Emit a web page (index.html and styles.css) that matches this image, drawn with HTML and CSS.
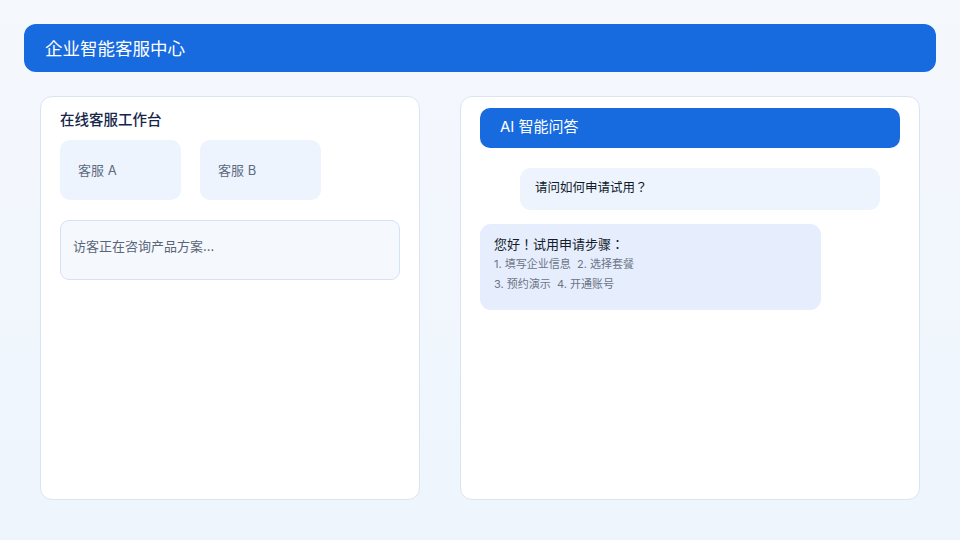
FILE: index.html
```html
<!DOCTYPE html>
<html>
<head>
<meta charset="utf-8">
<title>企业智能客服中心</title>
<link rel="stylesheet" href="styles.css">
</head>
<body>
<div class="page">
  <header class="topbar">企业智能客服中心</header>
  <main class="panels">
    <section class="panel panel-left">
      <h2 class="panel-title">在线客服工作台</h2>
      <div class="agents">
        <div class="agent">客服 A</div>
        <div class="agent">客服 B</div>
      </div>
      <div class="visitor">访客正在咨询产品方案...</div>
    </section>
    <section class="panel panel-right">
      <div class="ai-head">AI 智能问答</div>
      <div class="msg msg-user">请问如何申请试用？</div>
      <div class="msg msg-ai">
        <div class="ai-title">您好！试用申请步骤：</div>
        <div class="ai-line">1. 填写企业信息&nbsp; 2. 选择套餐</div>
        <div class="ai-line">3. 预约演示&nbsp; 4. 开通账号</div>
      </div>
    </section>
  </main>
</div>
</body>
</html>
```
FILE: styles.css
```css
* { box-sizing: border-box; }
html, body {
  margin: 0;
  padding: 0;
  width: 960px;
  height: 540px;
  overflow: hidden;
}
body {
  font-family: Inter, "Noto Sans CJK JP", sans-serif;
  background: linear-gradient(180deg, #f5f8fd 0%, #eef5fd 100%);
}
.page {
  padding: 24px 24px 0 24px;
}
.topbar {
  height: 48px;
  background: #186bdf;
  border-radius: 12px;
  color: #ffffff;
  font-size: 17.5px;
  line-height: 50px;
  padding-left: 21px;
}
.panels {
  display: flex;
  gap: 40px;
  margin: 24px 16px 0 16px;
}
.panel {
  height: 404px;
  background: #ffffff;
  border: 1px solid #d9e5f4;
  border-radius: 12px;
  padding: 11px 19px 0 19px;
}
.panel-left { width: 380px; }
.panel-right { width: 460px; }
.panel-title {
  margin: 0 0 8px 0;
  font-size: 14.5px;
  font-weight: 500;
  line-height: 24px;
  color: #16264a;
}
.agents {
  display: flex;
  gap: 19px;
}
.agent {
  width: 121px;
  height: 60px;
  background: #edf4fe;
  border-radius: 10px;
  display: flex;
  align-items: center;
  padding-left: 18px;
  padding-bottom: 2px;
  font-size: 13px;
  color: #5d6b80;
}
.visitor {
  margin-top: 20px;
  height: 60px;
  background: #f5f9fe;
  border: 1px solid #d4e2f3;
  border-radius: 9px;
  padding: 15px 12px;
  font-size: 13px;
  line-height: 20px;
  color: #5b6577;
}
.ai-head {
  height: 40px;
  background: #186bdf;
  border-radius: 10px;
  color: #ffffff;
  font-size: 15px;
  line-height: 38px;
  padding-left: 20px;
}
.msg {
  border-radius: 11px;
}
.msg-user {
  margin: 20px 20px 0 40px;
  height: 42px;
  background: #edf4fe;
  padding-left: 15px;
  font-size: 12.5px;
  line-height: 40px;
  color: #111a2a;
}
.msg-ai {
  margin-top: 14px;
  width: 341px;
  height: 86px;
  background: #e6eefd;
  padding: 10px 14px 0 14px;
}
.ai-title {
  font-size: 13px;
  line-height: 20px;
  color: #141c2b;
}
.ai-line {
  font-size: 11px;
  line-height: 20px;
  color: #6b7486;
}
```
